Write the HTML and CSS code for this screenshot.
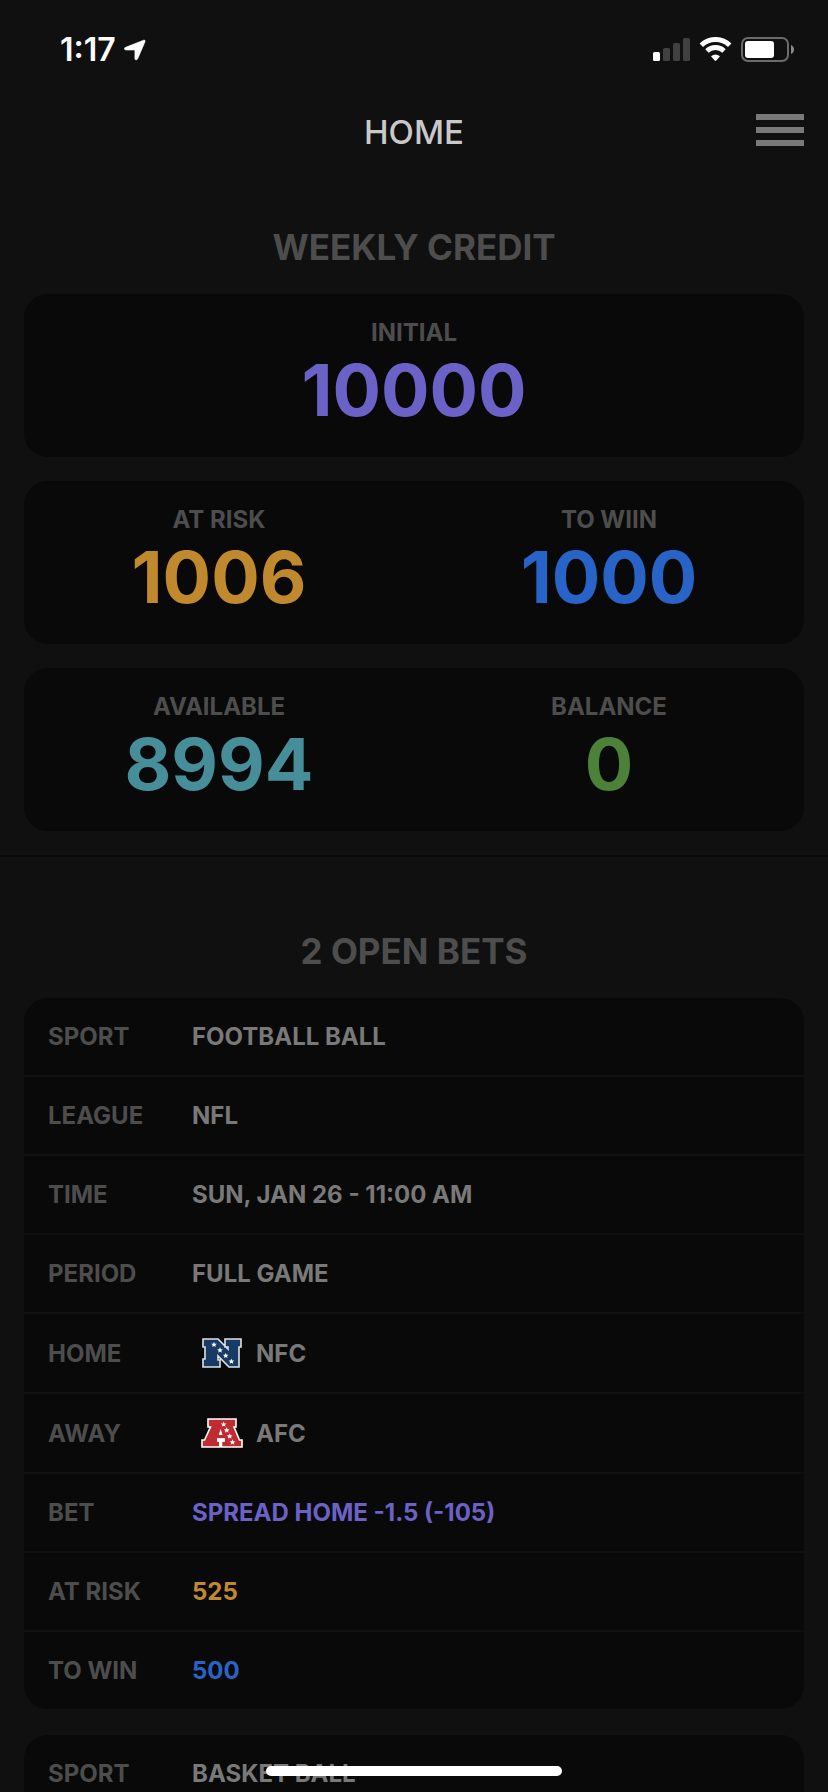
FILE: index.html
```html
<!DOCTYPE html>
<html lang="en">
<head>
<meta charset="utf-8">
<meta name="viewport" content="width=device-width, initial-scale=1">
<title>Home</title>
<link rel="stylesheet" href="styles.css">
</head>
<body>
<div class="app">
  <div class="status">
    <div class="status-side">
      <span class="time">1:17</span>
      <svg class="locate" width="22" height="22" viewBox="0 0 22 22" aria-hidden="true"><path d="M1.6 8.3 19.6 1.2Q21.6.7 21 2.7L13.700 19.800Q12.800 21.400 11.500 20.800Q10.900 20.500 10.900 19.600V11.600Q10.900 11 10.300 11H2.200Q.5 11 .4 9.700Q.4 8.800 1.600 8.300Z" fill="#fff" stroke="#fff" stroke-width=".6"/></svg>
    </div>
    <div class="status-side">
      <svg width="142" height="26" viewBox="0 0 142 26" aria-hidden="true">
        <rect x="0" y="15" width="7" height="9" rx="1.500" fill="#fff"/>
        <g fill="#404040"><rect x="10" y="11" width="7" height="13" rx="1.500"/><rect x="20" y="6" width="7" height="18" rx="1.500"/><rect x="30" y="1" width="7" height="23" rx="1.500"/></g>
        <g fill="none" stroke="#fff" stroke-width="5"><path d="M48.300 8.200A20.500 20.500 0 0 1 76.700 8.200"/><path d="M54 14A12.300 12.300 0 0 1 71 14"/></g>
        <path d="M58 19.300Q62.500 15.800 67 19.300L63.300 23.600Q62.500 24.400 61.700 23.600Z" fill="#fff"/>
        <rect x="89" y="1" width="46" height="23" rx="6" fill="none" stroke="#6b6b6b" stroke-width="2"/>
        <rect x="92" y="4" width="29" height="17" rx="3" fill="#fff"/>
        <path d="M138 8Q141 9.500 141 12.500T138 17Z" fill="#8a8a8a"/>
      </svg>
    </div>
  </div>

  <header class="nav">
    <h1 class="nav-title">HOME</h1>
    <button class="menu" type="button" aria-label="Menu"><svg width="48" height="32" viewBox="0 0 48 32" aria-hidden="true"><path d="M0 0H48V6H0ZM0 13H48V19H0ZM0 26H48V32H0Z" fill="#797979"/></svg></button>
  </header>

  <main>
    <section class="credit">
      <h2 class="heading">WEEKLY CREDIT</h2>
      <div class="cards">
        <dl class="card stats">
          <div class="stat"><dt>INITIAL</dt><dd class="violet">10000</dd></div>
        </dl>
        <dl class="card stats">
          <div class="stat"><dt>AT RISK</dt><dd class="amber">1006</dd></div>
          <div class="stat"><dt>TO WIIN</dt><dd class="blue">1000</dd></div>
        </dl>
        <dl class="card stats">
          <div class="stat"><dt>AVAILABLE</dt><dd class="teal">8994</dd></div>
          <div class="stat"><dt>BALANCE</dt><dd class="green">0</dd></div>
        </dl>
      </div>
    </section>

    <section class="bets">
      <h2 class="heading">2 OPEN BETS</h2>
      <div class="bet-list">
        <dl class="card">
          <div class="row"><dt>SPORT</dt><dd>FOOTBALL BALL</dd></div>
          <div class="row"><dt>LEAGUE</dt><dd>NFL</dd></div>
          <div class="row"><dt>TIME</dt><dd>SUN, JAN 26 - 11:00 AM</dd></div>
          <div class="row"><dt>PERIOD</dt><dd>FULL GAME</dd></div>
          <div class="row"><dt>HOME</dt><dd class="team">
            <svg class="logo" viewBox="0 0 60 30" aria-hidden="true">
              <defs><path id="star" d="M0-3 .8-1 2.900-.9 1.300.4 1.800 2.400 0 1.300-1.800 2.400-1.300.4-2.900-.9-.8-1Z" fill="#fff"/></defs>
              <g transform="translate(10 0)">
                <path d="M1 1H16L26 11V9H23V1H39V9H37V29H27L16 18V22H18V29H1V21H3V9H1Z" fill="#173b64" stroke="#dfe3e8" stroke-width="1.600"/>
                <use href="#star" x="12" y="6.700"/><use href="#star" x="18" y="12.300"/><use href="#star" x="23.700" y="17.700"/><use href="#star" x="29.400" y="23.400"/>
              </g>
            </svg>NFC</dd></div>
          <div class="row"><dt>AWAY</dt><dd class="team">
            <svg class="logo" viewBox="0 0 60 30" aria-hidden="true">
              <g transform="translate(9 0)">
                <path d="M7 1H35V9H33L38.500 22H41V29H20.500V23H23V21H17V23H18.800V29H1V22H3.500L9.500 9H7Z" fill="#c02a31" stroke="#fff" stroke-width="1.600"/>
                <path d="M19.600 11 21.500 17H17.800Z" fill="#fff"/>
                <path d="M16 20.500H24V23.500H21V29H18.500V23.500H16Z" fill="#fff"/>
                <use href="#star" x="22.700" y="6.400"/><use href="#star" x="25.700" y="12.300"/><use href="#star" x="28.700" y="18.300"/><use href="#star" x="31.500" y="24.300"/>
              </g>
            </svg>AFC</dd></div>
          <div class="row"><dt>BET</dt><dd class="violet">SPREAD HOME -1.5 (-105)</dd></div>
          <div class="row"><dt>AT RISK</dt><dd class="amber">525</dd></div>
          <div class="row"><dt>TO WIN</dt><dd class="blue">500</dd></div>
        </dl>
        <dl class="card">
          <div class="row"><dt>SPORT</dt><dd>BASKET BALL</dd></div>
        </dl>
      </div>
    </section>
  </main>
  <div class="home-bar"></div>
</div>
</body>
</html>
```
FILE: styles.css
```css
* { box-sizing: border-box; }
body {
  margin: 0;
  background: #101010;
  color: #797979;
  font-family: Inter, "Liberation Sans", sans-serif;
  font-weight: 700;
}
h1, h2, dl, dd { margin: 0; }
svg { display: block; }

.app { height: 100vh; overflow: hidden; }

.status {
  display: flex;
  justify-content: space-between;
  align-items: center;
  height: 88px;
  padding: 12px 33px 0 60px;
}
.status-side { display: flex; align-items: center; gap: 8px; }
.time { color: #fff; font-size: 32px; font-weight: 600; line-height: 40px; }

.nav {
  display: grid;
  grid-template-columns: 48px 1fr 48px;
  align-items: center;
  height: 89px;
  padding: 0 24px 2px;
}
.nav-title {
  grid-column: 2;
  color: #c9c9c9;
  font-size: 33px;
  font-weight: 500;
  line-height: 40px;
  text-align: center;
}
.menu { padding: 0 0 4px; border: 0; background: none; cursor: pointer; }

.credit { padding: 48px 24px 24px; border-bottom: 2px solid #090909; }
.bets { padding: 72px 24px 24px; }
.heading {
  margin-bottom: 24px;
  color: #4d4d4d;
  font-size: 35px;
  font-weight: 700;
  line-height: 45px;
  text-align: center;
}
.cards { display: grid; gap: 24px; }
.bet-list { display: grid; gap: 26px; }
.card { border-radius: 24px; background: #090909; }

.stats { display: flex; padding: 24px 0; text-align: center; }
.stat { flex: 1; }
dt { color: #4d4d4d; font-size: 24px; line-height: 29px; }
.stat dd { font-size: 72px; line-height: 86px; }

.row {
  display: grid;
  grid-template-columns: 144px 1fr;
  align-items: center;
  padding: 24px;
  border-bottom: 2px solid #101010;
}
.row:last-child { border-bottom: 0; }
.row dd { font-size: 24px; line-height: 29px; }
.row .team { display: flex; align-items: center; gap: 4px; }
.logo { width: 60px; height: 30px; }

.violet { color: #6b62c8; }
.amber { color: #c1892d; }
.blue { color: #2864c8; }
.teal { color: #468f9a; }
.green { color: #4c8139; }

.home-bar {
  position: fixed;
  bottom: 16px;
  left: 50%;
  width: 296px;
  height: 10px;
  margin-left: -148px;
  border-radius: 5px;
  background: #fff;
}
```
